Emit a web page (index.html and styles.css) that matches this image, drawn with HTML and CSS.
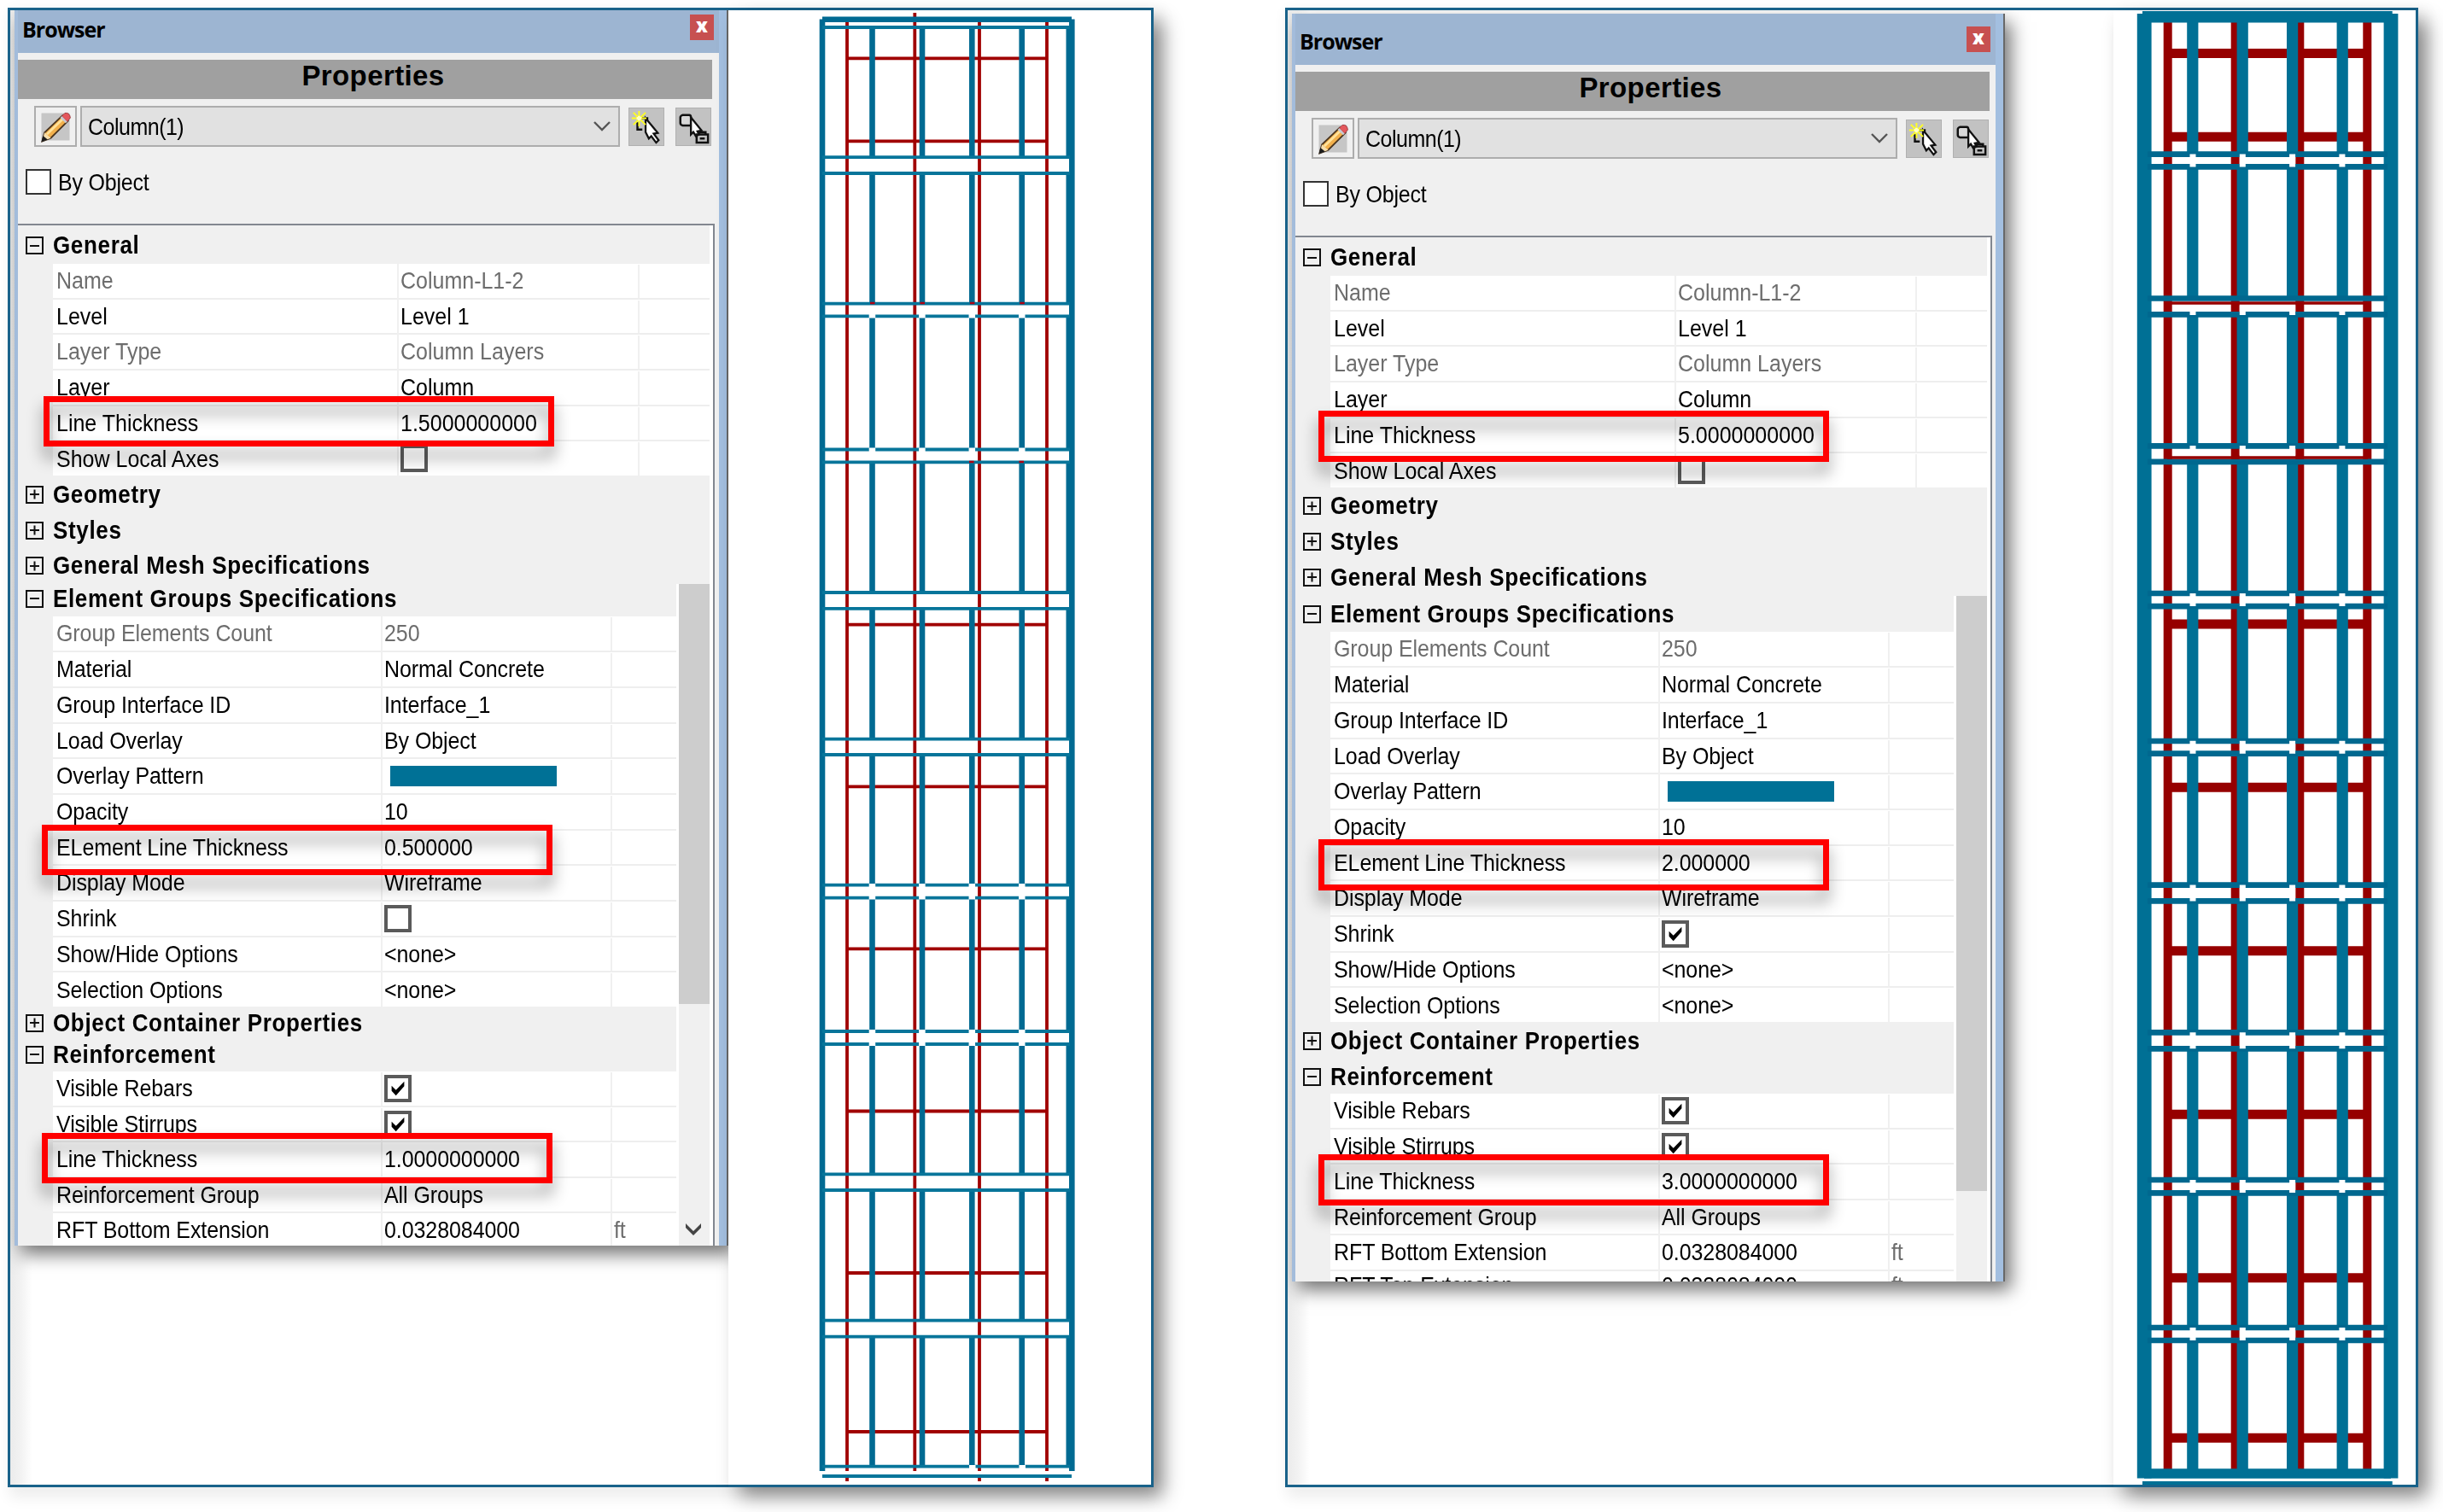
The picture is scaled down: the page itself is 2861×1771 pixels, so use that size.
FILE: index.html
```html
<!DOCTYPE html>
<html lang="en">
<head>
<meta charset="utf-8">
<title>Line thickness comparison</title>
<link rel="stylesheet" href="styles.css">
</head>
<body>
<svg class="defs" aria-hidden="true">
  <symbol id="pencil" viewBox="0 0 50 48">
    <path d="M7 7h36v35H7z" fill="#c6c6c6"/>
    <path d="M8 43l3-11L34 10l7 7-22 22z" fill="#f2b04c" stroke="#4a3520" stroke-width="2"/>
    <path d="M14 34L36 13" stroke="#ffe29a" stroke-width="3"/>
    <path d="M33 11l4-4q6-1 7 6l-4 5z" fill="#e4575c" stroke="#9a3a3e"/>
    <path d="M31 13l7 7 2-2-7-7z" fill="#c9c9d2"/>
    <path d="M8 43l3-11 8 7z" fill="#f6dfae"/>
    <path d="M7 44l2-8 6 5z" fill="#1c1c1c"/>
  </symbol>
  <symbol id="pick-new" viewBox="0 0 42 45">
    <path d="M12 12h10v6M10 17v9h6" fill="none" stroke="#111" stroke-width="2.6"/>
    <path d="M20 12l15 18-5 1 6 8-3 3-6-8-3 3-4-8z" fill="#fff" stroke="#111" stroke-width="2.4"/>
    <path d="M12 3v19M3 12h18M5 5l15 15M20 5L5 20" stroke="#ffff21" stroke-width="2"/>
    <path d="M9 12h6M12 9v6" stroke="#ffffc8" stroke-width="3"/>
  </symbol>
  <symbol id="pick-list" viewBox="0 0 42 45">
    <path d="M8 8h8q2 0 2 3v10H8q-3-1-3-3v-7q0-2 3-3z" fill="#d8d8d8" stroke="#111" stroke-width="2.6"/>
    <path d="M18 11l13 16-5 1 2 4-4 2-3-5-3 3z" fill="#fff" stroke="#111" stroke-width="2.4"/>
    <path d="M25 32h14v10H25zM28 32v-3h8v3M29 37h6" fill="none" stroke="#111" stroke-width="2.6"/>
  </symbol>
  <symbol id="chevron" viewBox="0 0 20 12"><path d="M1 1l9 9 9-9" fill="none" stroke="#555" stroke-width="2.4"/></symbol>
  <symbol id="tick" viewBox="0 0 26 26"><path d="M5 9.500V16l5.500 6L21 10V4l-10.500 11z" fill="#000"/></symbol>
</svg>

<main class="stage">
  <section class="frame frame-thin">
    <div class="side">
      <div class="panel">
        <header class="title"><span>Browser</span><b class="close">x</b></header>
        <h1 class="props">Properties</h1>
        <div class="tools">
          <svg class="pen"><use href="#pencil"/></svg>
          <div class="combo"><span class="t">Column(1)</span><svg class="chev"><use href="#chevron"/></svg></div>
          <svg class="pick"><use href="#pick-new"/></svg>
          <svg class="pick"><use href="#pick-list"/></svg>
        </div>
        <label class="by"><i></i><span class="t">By Object</span></label>
        <div class="grid">
          <div class="wide">
            <h2 class="h-general"><i class="ex"></i><span class="t">General</span></h2>
            <div class="row dim"><span class="t">Name</span><span class="t">Column-L1-2</span><span></span></div>
            <div class="row"><span class="t">Level</span><span class="t">Level 1</span><span></span></div>
            <div class="row dim"><span class="t">Layer Type</span><span class="t">Column Layers</span><span></span></div>
            <div class="row"><span class="t">Layer</span><span class="t">Column</span><span></span></div>
            <div class="row"><span class="t">Line Thickness</span><span class="t">1.5000000000</span><span></span></div>
            <div class="row"><span class="t">Show Local Axes</span><span><i class="box"></i></span><span></span></div>
            <h2 class="h-geometry"><i class="ex plus"></i><span class="t">Geometry</span></h2>
            <h2 class="h-styles"><i class="ex plus"></i><span class="t">Styles</span></h2>
            <h2 class="h-mesh"><i class="ex plus"></i><span class="t">General Mesh Specifications</span></h2>
          </div>
          <div class="narrow">
            <div class="list">
              <h2 class="h-groups"><i class="ex"></i><span class="t">Element Groups Specifications</span></h2>
              <div class="row dim"><span class="t">Group Elements Count</span><span class="t">250</span><span></span></div>
              <div class="row"><span class="t">Material</span><span class="t">Normal Concrete</span><span></span></div>
              <div class="row"><span class="t">Group Interface ID</span><span class="t">Interface_1</span><span></span></div>
              <div class="row"><span class="t">Load Overlay</span><span class="t">By Object</span><span></span></div>
              <div class="row"><span class="t">Overlay Pattern</span><span><i class="swatch"></i></span><span></span></div>
              <div class="row"><span class="t">Opacity</span><span class="t">10</span><span></span></div>
              <div class="row"><span class="t">ELement Line Thickness</span><span class="t">0.500000</span><span></span></div>
              <div class="row"><span class="t">Display Mode</span><span class="t">Wireframe</span><span></span></div>
              <div class="row"><span class="t">Shrink</span><span><i class="box"></i></span><span></span></div>
              <div class="row"><span class="t">Show/Hide Options</span><span class="t">&lt;none&gt;</span><span></span></div>
              <div class="row"><span class="t">Selection Options</span><span class="t">&lt;none&gt;</span><span></span></div>
              <h2 class="h-container"><i class="ex plus"></i><span class="t">Object Container Properties</span></h2>
              <h2 class="h-rft"><i class="ex"></i><span class="t">Reinforcement</span></h2>
              <div class="row"><span class="t">Visible Rebars</span><span><i class="box"><svg><use href="#tick"/></svg></i></span><span></span></div>
              <div class="row"><span class="t">Visible Stirrups</span><span><i class="box"><svg><use href="#tick"/></svg></i></span><span></span></div>
              <div class="row"><span class="t">Line Thickness</span><span class="t">1.0000000000</span><span></span></div>
              <div class="row"><span class="t">Reinforcement Group</span><span class="t">All Groups</span><span></span></div>
              <div class="row"><span class="t">RFT Bottom Extension</span><span class="t">0.0328084000</span><span class="t unit">ft</span></div>
            </div>
            <div class="scroll"><div class="thumb"></div><svg class="down" viewBox="0 0 20 16"><path d="M1 1v5l9 9 9-9V1l-9 9z" fill="#444"/></svg></div>
          </div>
        </div>
        <div class="mark mark-line"></div>
        <div class="mark mark-element"></div>
        <div class="mark mark-rft"></div>
      </div>
    </div>
    <div class="canvas">
      <svg viewBox="853 12 495 1727" width="495" height="1727">
        <g stroke="#a00000" stroke-width="3.800" fill="none">
          <path d="M992 26V1723M1071.300 15V1723M1147 26V1723M1226 26V1723M992 1730V1735M1147 1730V1735M1226 1730V1735"/>
          <path d="M992 68.400H1226M992 165.300H1226M992 731.600H1226M992 921.300H1226M992 1111.300H1226M992 1301.500H1226M992 1491H1226M992 1677H1226"/>
        </g>
        <g stroke="#006a92" fill="none">
          <path stroke-width="6.600" d="M963 22.500V1723M1255.300 22.500V1723M963 22.700H1255"/>
          <path stroke-width="6.600" stroke-dasharray="152 19 153 14 157 14 153 19 153 18 153 15 156 15 152 19 153 19 152" d="M1021.500 32V1718M1080 32V1718M1138.300 32V1718M1196.700 32V1718"/>
          <path stroke-width="5" stroke-dasharray="152 19 153 14 157 14 153 19 153 18 153 15 156 15 152 19 153 19 152" d="M1251 32V1718"/>
          <path stroke-width="3.800" stroke="#07759a" d="M963 32H1253M963 184.200H1253M963 203H1253M963 355.600H1253M963 370.400H1253M963 526.500H1253M963 541.300H1253M963 694H1253M963 712.800H1253M963 865.700H1253M963 884H1253M963 1036.700H1253M963 1051.700H1253M963 1208H1253M963 1223H1253M963 1375.300H1253M963 1394H1253M963 1546.700H1253M963 1565.700H1253M963 1717.700H1253M963 1729H1255"/>
        </g>
        <path stroke="#fff" stroke-width="5" stroke-dasharray="7.500 50.930" fill="none" d="M1017.700 370H1201M1017.700 527H1201M1017.700 1037.500H1201M1017.700 1051H1201M1017.700 1208.500H1201M1017.700 1222.500H1201M1135 1718.500H1201"/>
        <path stroke="#b00010" stroke-width="2.500" stroke-dasharray="5.500 52.930" d="M1019 355H1200M1135 541H1200"/>
      </svg>
    </div>
  </section>

  <section class="frame frame-thick">
    <div class="side">
      <div class="panel">
        <header class="title"><span>Browser</span><b class="close">x</b></header>
        <h1 class="props">Properties</h1>
        <div class="tools">
          <svg class="pen"><use href="#pencil"/></svg>
          <div class="combo"><span class="t">Column(1)</span><svg class="chev"><use href="#chevron"/></svg></div>
          <svg class="pick"><use href="#pick-new"/></svg>
          <svg class="pick"><use href="#pick-list"/></svg>
        </div>
        <label class="by"><i></i><span class="t">By Object</span></label>
        <div class="grid">
          <div class="wide">
            <h2 class="h-general"><i class="ex"></i><span class="t">General</span></h2>
            <div class="row dim"><span class="t">Name</span><span class="t">Column-L1-2</span><span></span></div>
            <div class="row"><span class="t">Level</span><span class="t">Level 1</span><span></span></div>
            <div class="row dim"><span class="t">Layer Type</span><span class="t">Column Layers</span><span></span></div>
            <div class="row"><span class="t">Layer</span><span class="t">Column</span><span></span></div>
            <div class="row"><span class="t">Line Thickness</span><span class="t">5.0000000000</span><span></span></div>
            <div class="row"><span class="t">Show Local Axes</span><span><i class="box"></i></span><span></span></div>
            <h2 class="h-geometry"><i class="ex plus"></i><span class="t">Geometry</span></h2>
            <h2 class="h-styles"><i class="ex plus"></i><span class="t">Styles</span></h2>
            <h2 class="h-mesh"><i class="ex plus"></i><span class="t">General Mesh Specifications</span></h2>
          </div>
          <div class="narrow">
            <div class="list">
              <h2 class="h-groups"><i class="ex"></i><span class="t">Element Groups Specifications</span></h2>
              <div class="row dim"><span class="t">Group Elements Count</span><span class="t">250</span><span></span></div>
              <div class="row"><span class="t">Material</span><span class="t">Normal Concrete</span><span></span></div>
              <div class="row"><span class="t">Group Interface ID</span><span class="t">Interface_1</span><span></span></div>
              <div class="row"><span class="t">Load Overlay</span><span class="t">By Object</span><span></span></div>
              <div class="row"><span class="t">Overlay Pattern</span><span><i class="swatch"></i></span><span></span></div>
              <div class="row"><span class="t">Opacity</span><span class="t">10</span><span></span></div>
              <div class="row"><span class="t">ELement Line Thickness</span><span class="t">2.000000</span><span></span></div>
              <div class="row"><span class="t">Display Mode</span><span class="t">Wireframe</span><span></span></div>
              <div class="row"><span class="t">Shrink</span><span><i class="box"><svg><use href="#tick"/></svg></i></span><span></span></div>
              <div class="row"><span class="t">Show/Hide Options</span><span class="t">&lt;none&gt;</span><span></span></div>
              <div class="row"><span class="t">Selection Options</span><span class="t">&lt;none&gt;</span><span></span></div>
              <h2 class="h-container"><i class="ex plus"></i><span class="t">Object Container Properties</span></h2>
              <h2 class="h-rft"><i class="ex"></i><span class="t">Reinforcement</span></h2>
              <div class="row"><span class="t">Visible Rebars</span><span><i class="box"><svg><use href="#tick"/></svg></i></span><span></span></div>
              <div class="row"><span class="t">Visible Stirrups</span><span><i class="box"><svg><use href="#tick"/></svg></i></span><span></span></div>
              <div class="row"><span class="t">Line Thickness</span><span class="t">3.0000000000</span><span></span></div>
              <div class="row"><span class="t">Reinforcement Group</span><span class="t">All Groups</span><span></span></div>
              <div class="row"><span class="t">RFT Bottom Extension</span><span class="t">0.0328084000</span><span class="t unit">ft</span></div>
              <div class="row cut"><span class="t">RFT Top Extension</span><span class="t">0.0328084000</span><span class="t unit">ft</span></div>
            </div>
            <div class="scroll"><div class="thumb"></div></div>
          </div>
        </div>
        <div class="mark mark-line"></div>
        <div class="mark mark-element"></div>
        <div class="mark mark-rft"></div>
      </div>
    </div>
    <div class="canvas">
      <svg viewBox="2475 12 354 1727" width="354" height="1727">
        <g stroke="#960000" fill="none">
          <path stroke-width="10" d="M2538.700 20V1725M2772.300 20V1725"/>
          <path stroke-width="10" d="M2617.700 20V1725M2693.300 20V1725"/>
          <path stroke-width="11" d="M2538 62.500H2773M2538 160.200H2773M2538 731H2773M2538 922.300H2773M2538 1113.700H2773M2538 1305.300H2773M2538 1496.700H2773M2538 1684.300H2773"/>
        </g>
        <g stroke="#007095" fill="none">
          <path stroke-width="16.800" d="M2511.200 16V1731.500M2800 16V1731.500"/>
          <path stroke-width="13.500" d="M2509 19.700H2801.700"/>
          <path stroke-width="11.500" d="M2511 1726H2800"/>
          <path stroke-width="4.500" d="M2509 1737.300H2801.700"/>
          <path stroke-width="13.200" stroke-dasharray="157 15 154 19 154 18 154.500 15 158 15 154 18.500 154 19 154 15 158 15 160" d="M2567.800 24V1726M2626.200 24V1726M2684.600 24V1726M2743.200 24V1726"/>
          <path stroke-width="6.700" stroke="#00688f" d="M2515 180.600H2796M2515 195.400H2796M2515 349.500H2796M2515 368.400H2796M2515 522.400H2796M2515 540.800H2796M2515 695H2796M2515 710.200H2796M2515 868H2796M2515 882.700H2796M2515 1036.700H2796M2515 1055.300H2796M2515 1209.300H2796M2515 1228.300H2796M2515 1382H2796M2515 1397.300H2796M2515 1555H2796M2515 1570H2796"/>
        </g>
        <g stroke="#fff" fill="none" stroke-dasharray="7 51.300">
          <path stroke-width="15" d="M2564.500 188H2747M2564.500 702.600H2747M2564.500 875.300H2747M2564.500 1389.600H2747M2564.500 1562.500H2747"/>
          <path stroke-width="19" d="M2564.500 1046H2747M2564.500 1218.800H2747"/>
          <path stroke-width="11" d="M2564.500 363.500H2747M2564.500 527.500H2747"/>
        </g>
        <path stroke="#960000" stroke-width="3.500" d="M2538 355H2773M2538 536H2773"/>
      </svg>
    </div>
  </section>
</main>
</body>
</html>
```
FILE: styles.css
```css
* { box-sizing: border-box; }
body { margin: 0; background: #fff; font-family: "Liberation Sans", Arial, sans-serif; font-size: 25px; color: #000; }
.defs { position: absolute; width: 0; height: 0; }
.stage { display: flex; gap: 154px; width: 2861px; height: 1771px; padding: 9px 0 0 9px; overflow: hidden; }

.frame { display: flex; height: 1733px; border: 3px solid #19628a; background: #fff; box-shadow: 6px 8px 16px 4px rgba(0, 0, 0, .07); }
.frame-thin { width: 1342px; }
.frame-thick { width: 1327px; }
.side { display: flex; align-items: flex-start; padding-left: 5px; overflow: hidden; background: linear-gradient(90deg, #ebebeb, #f2f2f2 12px, #fff 26px); }
.frame-thin .side { width: 841px; }
.frame-thick .side { width: 967px; padding-top: 4px; }
.canvas { flex: 1; background: #fff; box-shadow: 13px 13px 22px rgba(0, 0, 0, .45); position: relative; }
.canvas::before { content: ""; position: absolute; inset: 0 -3px -3px 0; border: solid #19628a; border-width: 0 3px 3px 0; }
.canvas svg { display: block; position: relative; }

.panel { position: relative; display: flex; flex-direction: column; border-left: 4px solid #a3bcdb; background: #f0f0f0; overflow: hidden; box-shadow: 7px 10px 20px rgba(0, 0, 0, .55); }
.panel::after { content: ""; position: absolute; inset: 0 0 0 auto; width: 9px; border-right: 2px solid #686868; background: #a3bfe0; }
.frame-thin .panel { width: 836px; height: 1447px; }
.frame-thick .panel { width: 835px; height: 1485px; }
.title { display: flex; flex-shrink: 0; justify-content: space-between; align-items: flex-end; height: 50px; margin-left: -4px; padding: 0 17px 15px 9px; background: #9db5d2; font: 700 25px/24px "Open Sans", "Noto Sans", sans-serif; }
.title span { padding-bottom: 1px; letter-spacing: -1px; }
.frame-thick .title { height: 60px; }
.close { width: 28px; height: 30px; background: #c75050; color: #fff; text-align: center; font-size: 22px; line-height: 25px; }
.props { flex-shrink: 0; width: 813px; height: 46px; margin: 8px 0 0; background: #a0a0a0; text-align: center; font-size: 33px; line-height: 38px; font-weight: 700; letter-spacing: .4px; padding-left: 19px; }
.tools { display: flex; flex-shrink: 0; align-items: center; height: 48px; margin: 8px 0 0 19px; }
.pen { width: 50px; height: 48px; border: 2px solid #adadad; margin-right: 4px; }
.combo { display: flex; justify-content: space-between; align-items: center; width: 632px; height: 48px; padding: 0 9px 0 7px; border: 2px solid #adadad; background: #e1e1e1; }
.combo .t { letter-spacing: -.5px; }
.chev { width: 20px; height: 12px; }
.pick { width: 42px; height: 45px; margin-left: 10px; border: 1px solid #b0b0b0; background: #c2c2c2; }
.pick + .pick { margin-left: 13px; }
.by { display: flex; flex-shrink: 0; align-items: center; height: 30px; margin: 26px 0 34px 9px; }
.by i { width: 30px; height: 30px; margin-right: 8px; border: 2px solid #333; background: #fff; }
.by .t { letter-spacing: -.2px; }
.t { display: block; white-space: nowrap; transform: scaleY(1.1); }

.grid { flex: 1; width: 816px; padding: 2px 3px 0 3px; border: solid #828790; border-width: 2px 2px 0 0; background: linear-gradient(90deg, #f0f0f0 810px, #fff 810px); }
.wide { width: 807px; }
h2 { display: flex; align-items: center; margin: 0; font-size: 26px; letter-spacing: .65px; padding-left: 6px; background: #f0f0f0; }
.ex { position: relative; flex: none; width: 21px; height: 21px; margin-right: 11px; border: 2px solid #111; }
.ex::before, .ex.plus::after { content: ""; position: absolute; left: 3px; top: 7.500px; width: 11px; height: 2px; background: #111; }
.ex.plus::after { transform: rotate(90deg); }
.h-general { height: 43px; }
.h-geometry { height: 44px; }
.h-styles { height: 40px; }
.h-mesh { height: 43px; }
.h-groups { height: 38px; padding-bottom: 4px; }
.h-container { height: 38px; }
.h-rft { height: 38px; padding-bottom: 2px; }
.row { display: grid; grid-template-columns: 403px 282px 84px; height: 41.700px; margin-left: 38px; border-bottom: 2px solid #eee; background: #fff; }
.row > span { display: flex; align-items: center; padding-left: 4px; }
.row > span + span { position: relative; }
.row > span + span::before { content: ""; position: absolute; left: 0; top: 1px; bottom: 0; width: 2px; background: #f0f0f0; }
.row:has(+ h2) { border-bottom: 0; height: 40px; }
.dim { color: #6d6d6d; }
.unit { color: #6d6d6d; }
.narrow { display: flex; }
.narrow .list { width: 768px; }
.narrow .row { grid-template-columns: 384px 269px 77px; }
.narrow .row .t { letter-spacing: -.08px; }
.narrow h2 ~ h2 ~ .row { height: 41.500px; }
.narrow .cut .t { align-self: start; height: 32px; }
.box { width: 32px; height: 32px; border: 4px solid #5a5a5a; background: #fff; }
.box svg { display: block; width: 24px; height: 24px; }
.swatch { width: 195px; height: 24px; margin-left: 7px; background: #007196; }
.scroll { position: relative; width: 39px; border-left: 3px solid #fff; background: #f0f0f0; }
.thumb { height: 492px; width: 36px; background: #cdcdcd; }
.down { position: absolute; left: 7px; top: 748px; width: 20px; height: 16px; }
.frame-thick .h-geometry { height: 43px; }
.frame-thick .h-mesh { height: 44px; }
.frame-thick .h-groups { height: 42px; padding: 0 0 0 6px; }
.frame-thick .h-container { height: 44px; }
.frame-thick .h-rft { height: 40px; padding-bottom: 0; }
.frame-thick .thumb { height: 697px; }

.mark { position: absolute; left: 28px; width: 598px; height: 59px; border: 7px solid #f00; filter: drop-shadow(0 13px 9px rgba(0, 0, 0, .42)); }
.mark-line { left: 30px; top: 452px; }
.mark-element { top: 954px; }
.mark-rft { top: 1315px; }
.frame-thick .mark { left: 27px; height: 60px; }
.frame-thick .mark-line { top: 465px; }
.frame-thick .mark-element { top: 967px; }
.frame-thick .mark-rft { top: 1336px; }
```
